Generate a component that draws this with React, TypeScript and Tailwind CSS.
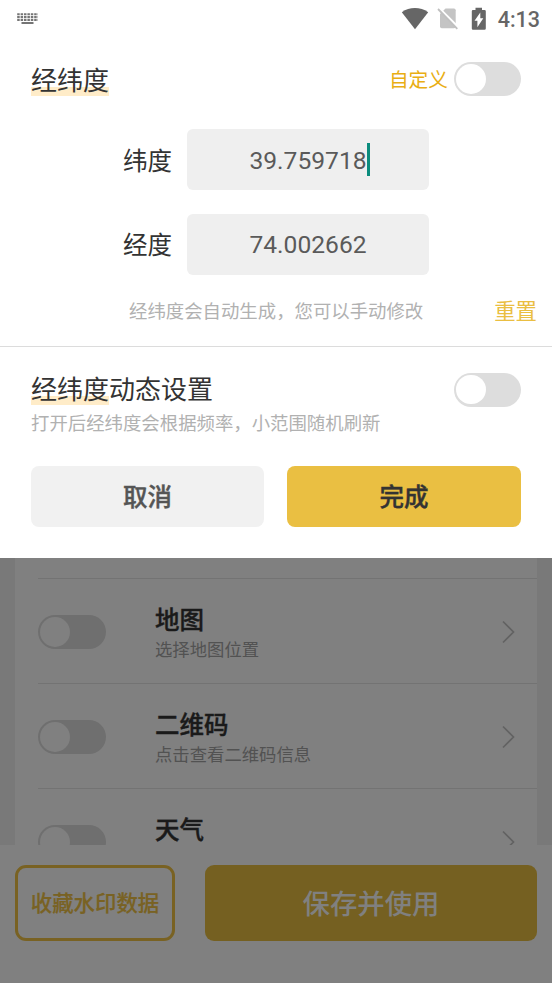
type SwitchProps = { dimmed?: boolean };

function Switch({ dimmed }: SwitchProps) {
  return (
    <button
      role="switch"
      aria-checked="false"
      className={`flex h-[34px] shrink-0 items-center rounded-full pl-0.5 ${
        dimmed ? "w-[68px] bg-[#6f6f6f]" : "w-[67px] bg-[#dddddd]"
      }`}
    >
      <span className={`size-[29.5px] rounded-full ${dimmed ? "bg-[#808080]" : "bg-white"}`} />
    </button>
  );
}

function KeyboardIcon() {
  return (
    <svg width="22" height="12" viewBox="0 0 22 12" fill="none" stroke="#757575">
      <path d="M0.2 1.2H21M0.2 4H21M0.2 6.9H21" strokeWidth="2.1" strokeDasharray="2.5 0.9" />
      <path d="M4.5 10H16.5" strokeWidth="2" />
    </svg>
  );
}

function StatusBar() {
  return (
    <header className="flex h-[38px] items-center justify-between pr-[12px] pl-[17px]">
      <KeyboardIcon />
      <div className="flex items-center">
        <svg width="28" height="22" viewBox="0 0 28 22" fill="#666666">
          <path d="M0.8 4.2C8.5-1.4 19.3-1.4 27.2 4.2L14 21.2Z" />
        </svg>
        <svg className="ml-[8px]" width="22" height="24" viewBox="0 0 22 24">
          <path d="M8.5 1.5H17Q18.7 1.5 18.7 3.2V19.5Q18.7 21.2 17 21.2H4.7Q3 21.2 3 19.5V7Z" fill="#c4c4c4" />
          <path d="M2 1L22 21" stroke="#fff" strokeWidth="2.4" />
          <path d="M1 2L20.3 21.8" stroke="#c0c0c0" strokeWidth="1.8" />
        </svg>
        <svg className="ml-[12px]" width="16" height="24" viewBox="0 0 16 24">
          <path d="M4.5 0.8H11V3H13.5Q14.8 3 14.8 4.3V21.5Q14.8 22.8 13.5 22.8H2Q0.8 22.8 0.8 21.5V4.3Q0.8 3 2 3H4.5Z" fill="#666666" />
          <path d="M9.3 5.5V11.2H12.3L6.4 20.2V13.8H3.5Z" fill="#fff" />
        </svg>
        <span className="ml-[11px] pt-px text-[21.5px] leading-none font-medium text-[#666666]">
          4:13
        </span>
      </div>
    </header>
  );
}

type FieldProps = { label: string; value: string; focused?: boolean };

function Field({ label, value, focused }: FieldProps) {
  return (
    <div className="flex items-center pl-[123px]">
      <label className="w-16 pt-[5px] text-[24.5px] leading-none text-[#333333]">{label}</label>
      <div className="flex h-[61px] w-[242px] items-center justify-center rounded-md bg-[#efefef] pt-[3px] text-[24.6px] text-[#5a5a5a]">
        <span className="relative">
          {value}
          {focused && <i className="absolute top-0 -right-[3px] h-[33px] w-[3px] bg-[#0b8c7d]" />}
        </span>
      </div>
    </div>
  );
}

function Highlight({ children }: { children: string }) {
  return (
    <span className="inline-block bg-[linear-gradient(to_top,#ffecc8_9px,transparent_9px)] pt-[5px] leading-[29px]">
      {children}
    </span>
  );
}

function CoordinateDialog() {
  return (
    <section className="h-[558px] shrink-0 bg-white">
      <StatusBar />

      {/* Coordinates */}
      <div className="flex h-[82px] items-center pr-[31px] pl-[31px]">
        <h2 className="text-[26px] leading-[29px] text-[#333333]">
          <Highlight>经纬度</Highlight>
        </h2>
        <span className="mr-1.5 ml-auto pt-1 text-[19.7px] text-[#e9ae13]">自定义</span>
        <Switch />
      </div>

      <div className="flex flex-col gap-[23.5px] pt-[9px]">
        <Field label="纬度" value="39.759718" focused />
        <Field label="经度" value="74.002662" />
      </div>

      <div className="flex h-[72px] items-center border-b-[1.5px] border-[#dcdcdc] pr-[15px] pl-[129px]">
        <p className="pt-[3px] text-[18.4px] text-[#b1b1b1]">经纬度会自动生成，您可以手动修改</p>
        <button className="ml-auto pt-[5px] text-[21.4px] text-[#eabe42]">重置</button>
      </div>

      {/* Dynamic refresh */}
      <div className="flex h-[119px] justify-between pr-[31px] pl-[31px]">
        <div className="pt-6">
          <h2 className="h-[34px] text-[26px] leading-[29px] text-[#333333]">
            <Highlight>经纬度</Highlight>动态设置
          </h2>
          <p className="mt-[5px] text-[18.4px] leading-7 text-[#b1b1b1]">
            打开后经纬度会根据频率，小范围随机刷新
          </p>
        </div>
        <div className="pt-[26px]">
          <Switch />
        </div>
      </div>

      <div className="flex gap-[23px] pr-[31px] pl-[31px]">
        <button className="h-[61px] w-[233px] rounded-lg bg-[#f1f1f1] pt-[5px] text-[24.5px] leading-none font-medium text-[#555555] [-webkit-text-stroke:0.4px]">
          取消
        </button>
        <button className="h-[61px] flex-1 rounded-lg bg-[#eabf42] pt-[5px] text-[24.5px] leading-none font-medium text-[#333333] [-webkit-text-stroke:0.4px]">
          完成
        </button>
      </div>
    </section>
  );
}

const rows = [
  { title: "地图", detail: "选择地图位置" },
  { title: "二维码", detail: "点击查看二维码信息" },
  { title: "天气", detail: "" },
];

function WatermarkList() {
  return (
    <section className="h-[287px] shrink-0 overflow-hidden bg-[#797979] px-[15px]">
      <div className="h-full bg-[#808080] pt-5 pl-[23px]">
        {rows.map((row) => (
          <div key={row.title} className="flex h-[105px] items-center border-t border-[#737373] pt-0.5 pr-[22px]">
            <Switch dimmed />
            <div className="ml-[49px] h-[60px] pt-px">
              <h3 className="text-[24.5px] leading-[36px] font-medium text-[#1a1a1a] [-webkit-text-stroke:0.4px]">
                {row.title}
              </h3>
              <p className="-mt-px text-[17.35px] leading-[24px] text-[#525252]">{row.detail}</p>
            </div>
            <svg className="ml-auto" width="13" height="24" viewBox="0 0 13 24" fill="none">
              <path d="M1 1.5L11.5 12L1 22.5" stroke="#626262" strokeWidth="1.7" />
            </svg>
          </div>
        ))}
      </div>
    </section>
  );
}

export default function App() {
  return (
    <main className="flex h-[983px] w-[552px] flex-col overflow-hidden bg-[#808080] font-[Roboto,'Noto_Sans_CJK_SC',sans-serif]">
      <CoordinateDialog />
      <WatermarkList />

      {/* Bottom actions */}
      <footer className="flex gap-[30px] px-[15px] pt-5">
        <button className="h-[76px] w-[160px] rounded-[11px] border-3 border-[#796223] pt-0.5 text-[21.4px] font-medium whitespace-nowrap text-[#796223] [-webkit-text-stroke:0.2px]">
          收藏水印数据
        </button>
        <button className="h-[76px] flex-1 rounded-[9px] bg-[#756021] pt-[5px] text-[27.4px] font-medium text-[#808080]">
          保存并使用
        </button>
      </footer>
    </main>
  );
}
